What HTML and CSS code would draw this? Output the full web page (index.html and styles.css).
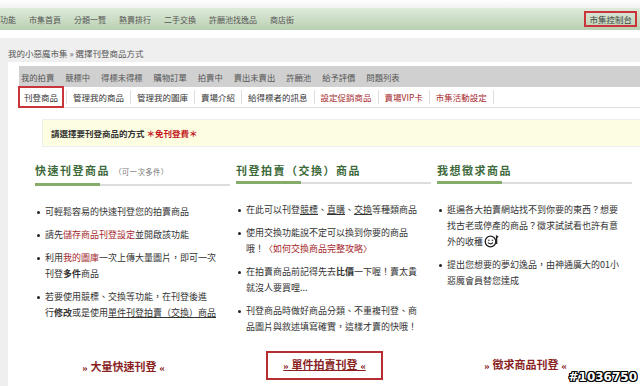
FILE: index.html
```html
<!DOCTYPE html>
<html lang="zh-Hant">
<head>
    <meta charset="UTF-8">
    <meta name="viewport" content="width=device-width, initial-scale=1.0">
    <title>選擇刊登商品方式</title>
    <link rel="stylesheet" href="styles.css">
</head>
<body>

<div class="top-strip"></div>

<!-- 上方導覽列 -->
<div class="nav">
    <div class="nav-links">
        <a href="#">功能</a>
        <a href="#">市集首頁</a>
        <a href="#">分類一覽</a>
        <a href="#">熱賣排行</a>
        <a href="#">二手交換</a>
        <a href="#">許願池找逸品</a>
        <a href="#">商店街</a>
    </div>
    <a href="#" class="console-link">市集控制台</a>
</div>

<div class="nav-gap"></div>

<div class="main">
    <div class="breadcrumb">我的小惡魔市集 » 選擇刊登商品方式</div>

    <div class="panel">
        <!-- 第一層分頁 -->
        <div class="tabs-main">
            <a href="#">我的拍賣</a>
            <a href="#">競標中</a>
            <a href="#">得標未得標</a>
            <a href="#">購物訂單</a>
            <a href="#">拍賣中</a>
            <a href="#">賣出未賣出</a>
            <a href="#">許願池</a>
            <a href="#">給予評價</a>
            <a href="#">問題列表</a>
        </div>

        <!-- 第二層分頁 -->
        <div class="tabs-sub">
            <a href="#" class="current">刊登商品</a>
            <a href="#">管理我的商品</a>
            <a href="#">管理我的圖庫</a>
            <a href="#">賣場介紹</a>
            <a href="#">給得標者的訊息</a>
            <a href="#" class="red">設定促銷商品</a>
            <a href="#" class="red">賣場VIP卡</a>
            <a href="#" class="red last">市集活動設定</a>
        </div>

        <div class="notice">請選擇要刊登商品的方式 <span class="free">＊免刊登費＊</span></div>

        <div class="columns">
            <div class="col">
                <h2 class="col-title">快速刊登商品 <small>（可一次多件）</small></h2>
                <ul class="col-list">
                    <li>可輕鬆容易的快速刊登您的拍賣商品</li>
                    <li>請先<a href="#" class="red">儲存商品刊登設定</a>並開啟該功能</li>
                    <li>利用<a href="#" class="red">我的圖庫</a>一次上傳大量圖片，即可一次<br>刊登<b>多件</b>商品</li>
                    <li>若要使用競標、交換等功能，在刊登後進<br>行<b>修改</b>或是使用<u>單件刊登拍賣（交換）商品</u></li>
                </ul>
                <div class="col-link"><a href="#">» 大量快速刊登 «</a></div>
            </div>

            <div class="col">
                <h2 class="col-title">刊登拍賣（交換）商品</h2>
                <ul class="col-list">
                    <li>在此可以刊登<u>競標</u>、<u>直購</u>、<u>交換</u>等種類商品</li>
                    <li>使用交換功能說不定可以換到你要的商品<br>哦！<a href="#" class="red">〈如何交換商品完整攻略〉</a></li>
                    <li>在拍賣商品前記得先去<b>比價</b>一下喔！賣太貴<br>就沒人要買哩...</li>
                    <li>刊登商品時做好商品分類、不重複刊登、商<br>品圖片與敘述填寫確實，這樣才賣的快哦！</li>
                </ul>
                <div class="col-link"><a href="#" class="boxed">» 單件拍賣刊登 «</a></div>
            </div>

            <div class="col">
                <h2 class="col-title">我想徵求商品</h2>
                <ul class="col-list">
                    <li>逛遍各大拍賣網站找不到你要的東西？想要<br>找古老或停產的商品？徵求試試看也許有意<br>外的收穫<svg class="smiley" width="16" height="14" viewBox="0 0 16 14"><circle cx="6.5" cy="7.5" r="5.3" fill="#fff" stroke="#222" stroke-width="1.3"/><path d="M4 6.2h1.6M7.6 6.2h1.6" stroke="#222" stroke-width="1.1"/><path d="M4 8.6q2.5 2.6 5 0" fill="none" stroke="#222" stroke-width="1.1"/><path d="M12.6 10V2.2l1.6 1" fill="none" stroke="#222" stroke-width="1.4"/></svg></li>
                    <li>提出您想要的夢幻逸品，由神通廣大的01小<br>惡魔會員替您達成</li>
                </ul>
                <div class="col-link"><a href="#">» 徵求商品刊登 «</a></div>
            </div>
        </div>
    </div>
</div>

<div class="watermark">#1036750</div>

</body>
</html>
```

FILE: styles.css
```css
body {
    margin: 0;
    font-family: "Noto Sans CJK TC", "Noto Sans", sans-serif;
    font-size: 9px;
    color: #333;
    background-color: #fff;
    height: 386px;
    overflow: hidden;
    position: relative;
}

a {
    color: inherit;
    text-decoration: none;
}

.top-strip {
    height: 8px;
    background: linear-gradient(#fff, #f1f1f1);
}

/* 導覽列 */
.nav {
    height: 22px;
    display: flex;
    align-items: center;
    justify-content: space-between;
    background: linear-gradient(#dfeadb, #b9d0b2);
}

.nav-links {
    display: flex;
    gap: 13px;
    font-size: 8px;
    color: #555;
}

.console-link {
    margin-right: 3px;
    border: 2px solid #c9353a;
    padding: 0 3px;
    height: 12px;
    line-height: 12px;
    font-size: 8.5px;
    color: #444;
}

.nav-gap {
    height: 8px;
}

.main {
    background-color: #efefef;
    padding-left: 8px;
}

.breadcrumb {
    padding-top: 6px;
    height: 18px;
    line-height: 18px;
    font-size: 8.5px;
    color: #555;
}

.panel {
    background-color: #fff;
    padding: 4px 0 0 11px;
    height: 320px;
}

/* 分頁 */
.tabs-main {
    display: flex;
    align-items: center;
    gap: 11px;
    height: 21px;
    padding-left: 2px;
    background-color: #d0d0d0;
    font-size: 8.3px;
    color: #555;
}

.tabs-sub {
    display: flex;
    align-items: center;
    height: 20px;
    margin-left: -1px;
    border-bottom: 1px solid #ddd;
    font-size: 8.5px;
}

.tabs-sub a {
    padding: 0 6px;
    line-height: 14px;
    border-left: 1px solid #ddd;
    color: #333;
}

.tabs-sub a.last {
    border-right: 1px solid #ddd;
}

.tabs-sub a.current {
    border: 2px solid #c9353a;
    padding: 0 4px;
    line-height: 18px;
    margin-right: 2px;
}

.tabs-sub a.red,
.col-list a.red {
    color: #a5282c;
}

.notice {
    margin: 11px 0 0 23px;
    height: 26px;
    line-height: 26px;
    padding-left: 8px;
    border: 1px solid #eee;
    border-right: none;
    background-color: #fdfde1;
    font-size: 8.5px;
    font-weight: bold;
}

.notice .free {
    color: #c4161c;
}

/* 三欄 */
.columns {
    margin-left: 16px;
    display: grid;
    grid-template-columns: repeat(3, 195px);
    gap: 6px;
}

.col-title {
    position: relative;
    margin: 0;
    padding: 15px 0 4px;
    font-size: 11px;
    line-height: 16px;
    letter-spacing: 1.5px;
    color: #3d6a3a;
    border-bottom: 2px solid #ddd;
}

.col-title::after {
    content: "";
    position: absolute;
    left: 0;
    bottom: -2px;
    width: 65px;
    height: 3px;
    background-color: #86ac6c;
}

.col-title small {
    font-size: 7.5px;
    font-weight: normal;
    letter-spacing: 0.3px;
    color: #777;
}

.col-list {
    list-style: none;
    margin: 0;
    padding: 18px 8px 0 0;
    height: 167px;
    box-sizing: border-box;
}

.col-list li {
    position: relative;
    padding-left: 10px;
    margin-bottom: 7px;
    line-height: 16px;
    color: #333;
}

.col-list li::before {
    content: "";
    position: absolute;
    left: 2px;
    top: 7px;
    width: 3px;
    height: 3px;
    border-radius: 50%;
    background-color: #222;
}

.smiley {
    vertical-align: -3px;
    margin-left: 1px;
}

.col-link {
    text-align: center;
    padding-right: 18px;
}

.col-link a {
    display: inline-block;
    padding: 6px 15px;
    border: 2px solid transparent;
    font-family: "Liberation Serif", "Noto Sans CJK TC", serif;
    font-size: 11px;
    font-weight: bold;
    line-height: 13px;
    color: #8a1f1f;
}

.col-link a.boxed {
    border-color: #b52d30;
    text-decoration: underline;
}

.watermark {
    position: absolute;
    right: 3px;
    bottom: 2px;
    font-family: "DejaVu Sans", sans-serif;
    font-size: 12px;
    font-weight: bold;
    color: #fff;
    text-shadow: 1px 0 0 #000, -1px 0 0 #000, 0 1px 0 #000, 0 -1px 0 #000,
                 1px 1px 0 #000, -1px -1px 0 #000, 1px -1px 0 #000, -1px 1px 0 #000;
}
```
